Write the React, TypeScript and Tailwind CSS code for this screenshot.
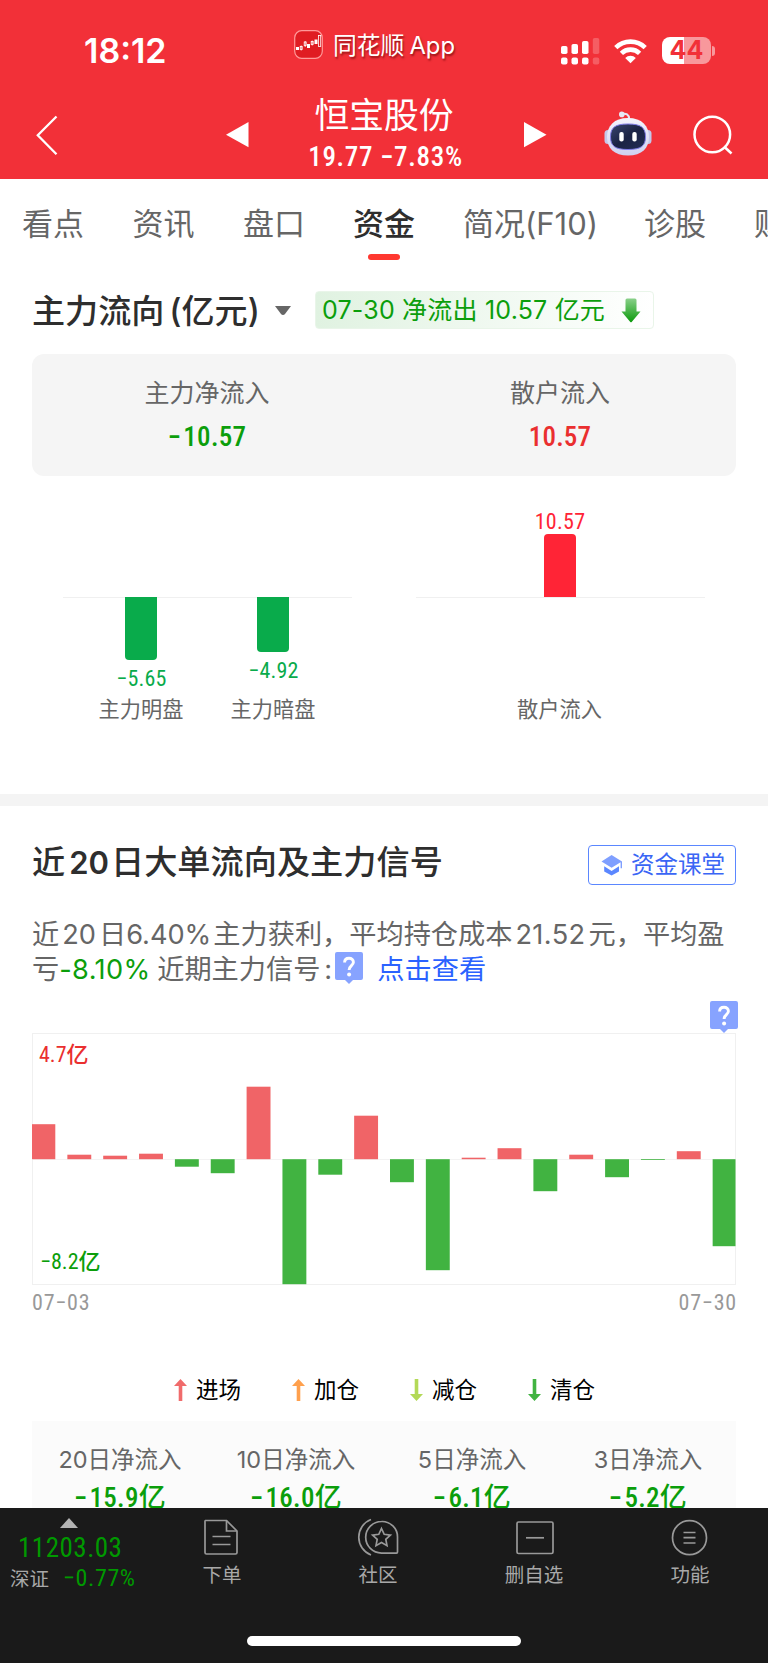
import type { ReactNode } from 'react';

const TABS = [
  { label: '看点', width: 'w-[110.500px]' },
  { label: '资讯', width: 'w-[110.500px]' },
  { label: '盘口', width: 'w-[110px]' },
  { label: '资金', width: 'w-[110px]', active: true },
  { label: '简况(F10)', width: 'w-[181px]' },
  { label: '诊股', width: 'w-[110px]' },
  { label: '财务', width: 'w-[110px]' },
];

// bar heights in px, positive above the zero line
const DAILY = [
  35, 4.5, 3.5, 5.5, -7.5, -14, 72.5, -125, -15.5, 43.5,
  -23, -111, 1.5, 11, -32, 4.5, -18, -0.8, 8, -87,
];

const LEGEND = [
  { label: '进场', color: 'text-[#f06b6b]', up: true },
  { label: '加仓', color: 'text-[#ffa04d]', up: true },
  { label: '减仓', color: 'text-[#b3d957]', up: false },
  { label: '清仓', color: 'text-[#41b341]', up: false },
];

const TOTALS = [
  { label: '20日净流入', value: '15.9' },
  { label: '10日净流入', value: '16.0' },
  { label: '5日净流入', value: '6.1' },
  { label: '3日净流入', value: '5.2' },
];

function Num({ children, className = '' }: { children: ReactNode; className?: string }) {
  return (
    <span className={`inline-block whitespace-nowrap font-['Roboto','Noto_Sans_CJK_SC',sans-serif] font-[450] [font-stretch:87%] ${className}`}>
      {children}
    </span>
  );
}

function HelpIcon() {
  return (
    <svg width="28" height="32" viewBox="0 0 28 32" className="block shrink-0">
      <path d="M2 0h24a2 2 0 0 1 2 2v24a2 2 0 0 1-2 2h-8l-4 4-4-4H2a2 2 0 0 1-2-2V2a2 2 0 0 1 2-2z" fill="#87a3ff" />
      <path d="M9.6 10.6c0-2.7 1.8-4.3 4.4-4.3s4.4 1.6 4.4 4c0 3.3-4.3 3.5-4.3 7.6" fill="none" stroke="#fff" strokeWidth="2.9" />
      <circle cx="14.1" cy="22.5" r="2" fill="#fff" />
    </svg>
  );
}

function StatusBar() {
  return (
    <div className="flex h-[90px] items-start text-white">
      <div className="ml-[84px] mt-[31px] w-[210px] text-[34px] font-semibold leading-10">18:12</div>
      <svg width="29" height="29" viewBox="0 0 29 29" className="mt-[30px]">
        <rect x="0.7" y="0.7" width="27.6" height="27.6" rx="7" fill="#e01c22" stroke="#f99" strokeWidth="1.2" />
        <g fill="#fff">
          <rect x="2" y="17" width="3" height="3" />
          <rect x="13" y="14" width="3" height="4" />
          <rect x="20.500" y="9.500" width="3" height="4.500" />
        </g>
        <g fill="none" stroke="#fff" strokeWidth="0.8">
          <path d="M7.200 15.500v5M11.200 11v6M18.200 10.500v5" />
          <rect x="6.200" y="16.500" width="2" height="3" />
          <rect x="10.200" y="12" width="2" height="3.500" />
          <rect x="17.200" y="11.500" width="2" height="3" />
          <rect x="24.500" y="5.500" width="2.200" height="11" />
        </g>
      </svg>
      <div className="ml-[10px] mt-[30px] w-[228px] whitespace-nowrap text-[23.800px] leading-8 [text-shadow:1px_2px_2px_rgba(90,0,0,0.6)]">
        同花顺<span className="ml-[5px]">App</span>
      </div>
      <svg width="39" height="28" viewBox="0 0 39 28" className="mt-[37px]" fill="#fff">
        <rect x="0" y="9" width="6.500" height="8" rx="1.800" />
        <rect x="0" y="20.500" width="6.500" height="7" rx="2" />
        <rect x="10.500" y="7" width="6.500" height="10" rx="1.800" />
        <rect x="10.500" y="20.500" width="6.500" height="7" rx="2" />
        <rect x="21" y="4" width="6.500" height="13" rx="1.800" />
        <rect x="21" y="20.500" width="6.500" height="7" rx="2" />
        <rect x="31.800" y="1" width="6.500" height="16" rx="1.800" opacity=".22" />
        <rect x="31.800" y="20.500" width="6.500" height="7" rx="2" opacity=".22" />
      </svg>
      <svg width="33" height="25" viewBox="0 0 33 25" className="ml-[14px] mt-[39px]">
        <g fill="none" stroke="#fff" strokeWidth="4.600">
          <path d="M1.800 8.600a21 21 0 0 1 29.400 0" />
          <path d="M7.400 14.300a13 13 0 0 1 18.200 0" />
        </g>
        <path d="M16.500 24.300l-5.300-5.400a7.500 7.500 0 0 1 10.600 0z" fill="#fff" />
      </svg>
      <div className="ml-[15px] mt-[37px] flex h-[27px] items-center">
        <div className="flex h-full w-[49px] items-center justify-center rounded-[8px] bg-[linear-gradient(90deg,#fff_0_44%,#f8989c_44%)] text-[25px] font-bold leading-none text-[#f23038]">
          44
        </div>
        <div className="ml-px h-2.5 w-[3px] rounded-r-full bg-[#f8989c]" />
      </div>
    </div>
  );
}

function Robot() {
  return (
    <svg width="48" height="46" viewBox="0 0 48 46" className="block">
      <defs>
        <linearGradient id="shell" x1="0" y1="0" x2="0" y2="1">
          <stop offset="0" stopColor="#f4f4fd" />
          <stop offset="1" stopColor="#cfd0f0" />
        </linearGradient>
        <linearGradient id="face" x1="0" y1="0" x2="1" y2="1">
          <stop offset="0" stopColor="#39456f" />
          <stop offset="0.500" stopColor="#1b2344" />
          <stop offset="1" stopColor="#232c55" />
        </linearGradient>
      </defs>
      <path d="M18 3c4-1 7 0.500 7.200 5" fill="none" stroke="#e6e8f6" strokeWidth="2" />
      <circle cx="17.800" cy="3.400" r="2.800" fill="#e6e8f6" />
      <rect x="0.500" y="19" width="7" height="14" rx="3.500" fill="#c5c7ea" />
      <rect x="40.500" y="19" width="7" height="14" rx="3.500" fill="#c5c7ea" />
      <path d="M24 7c14 0 21 8 21 19s-7 18.500-21 18.500S3 37 3 26 10 7 24 7z" fill="url(#shell)" />
      <path d="M24 13c13 0 17.500 3.500 17.500 12.800S37 38.500 24 38.500 6.500 35.100 6.500 25.800 11 13 24 13z" fill="url(#face)" stroke="#7f7be6" strokeWidth="1" />
      <rect x="15.300" y="21" width="4.400" height="9.500" rx="2" fill="#fff" />
      <rect x="28.300" y="21" width="4.400" height="9.500" rx="2" fill="#fff" />
    </svg>
  );
}

function NavBar() {
  return (
    <div className="flex h-[89px] items-start text-white">
      <svg width="22" height="40" viewBox="0 0 22 40" className="ml-9 mt-[25px]" fill="none" stroke="#fff" strokeWidth="2.300">
        <path d="M20.500 1.500L1.800 20.300l18.700 18.900" />
      </svg>
      <svg width="23" height="26" viewBox="0 0 23 26" className="ml-[168px] mt-8" fill="#fff">
        <path d="M0 12.800L22.500 0v25.300z" />
      </svg>
      <div className="flex w-[275px] flex-col items-center pr-[5px]">
        <div className="mt-0.5 text-[34.800px] leading-[46px]">恒宝股份</div>
        <Num className="ml-[3px] mt-[3px] text-[27px] font-medium leading-8 tracking-[0.700px]">19.77 −7.83%</Num>
      </div>
      <svg width="23" height="26" viewBox="0 0 23 26" className="mt-8" fill="#fff">
        <path d="M22.500 12.800L0 0v25.300z" />
      </svg>
      <div className="ml-[57px] mt-[21px]">
        <Robot />
      </div>
      <svg width="42" height="42" viewBox="0 0 42 42" className="ml-10 mt-6" fill="none" stroke="#fff" strokeWidth="2.500">
        <circle cx="20.300" cy="20.500" r="17.800" />
        <path d="M32 32.500l7.500 7" />
      </svg>
    </div>
  );
}

function FlowBar({ value, label, height }: { value: string; label: string; height: number }) {
  const up = height > 0;
  return (
    <div className="flex w-[132px] flex-col items-center">
      <div className="flex h-[91px] flex-col items-center justify-end">
        {up && (
          <>
            <Num className="text-[22px] leading-6 tracking-[0.300px] text-[#ff2436]">{value}</Num>
            <div className="w-8 rounded-t-[4px] bg-[#ff2436]" style={{ height }} />
          </>
        )}
      </div>
      <div className="flex h-[96px] flex-col items-center">
        {!up && (
          <>
            <div className="w-8 rounded-b-[4px] bg-[#09ab4b]" style={{ height: -height }} />
            <Num className="mt-[7px] text-[22px] leading-6 tracking-[0.200px] text-[#09ab4b]">{value}</Num>
          </>
        )}
      </div>
      <div className="-ml-px text-[21.200px] leading-8 text-[#666]">{label}</div>
    </div>
  );
}

function MainFlow() {
  return (
    <section className="h-[524px] px-8">
      <div className="flex items-start pt-[21px]">
        <h2 className="w-[243px] whitespace-nowrap pt-px text-[33.100px] font-medium leading-[38px] text-[#2e2e2e]">
          主力流向<span className="ml-[5px]">(</span>亿元)
        </h2>
        <svg width="16" height="9" viewBox="0 0 16 9" className="mt-[15px]" fill="#666">
          <path d="M0 0h16L10 8a2.500 2.500 0 0 1-4 0z" />
        </svg>
        <div className="ml-[24px] flex h-[38px] w-[339px] items-center rounded-[4px] border border-[#e9f5e9] bg-linear-to-r from-[#e0f2e1] to-white pl-1.5 text-[25px] text-[#0b9e0b]">
          <span className="w-[299px] whitespace-nowrap pt-px tracking-[0.200px]">07-30 净流出 10.57 亿元</span>
          <svg width="20" height="25" viewBox="0 0 20 25">
            <defs>
              <linearGradient id="down" x1="0" y1="0" x2="0" y2="1">
                <stop offset="0" stopColor="#8ad08a" />
                <stop offset="1" stopColor="#0b9a0b" />
              </linearGradient>
            </defs>
            <path d="M6 0.500h8a1.500 1.500 0 0 1 1.500 1.500v11.500h4L10.700 24a1 1 0 0 1-1.400 0L0.500 13.500h4V2A1.500 1.500 0 0 1 6 0.500z" fill="url(#down)" />
          </svg>
        </div>
      </div>

      <div className="mt-6 grid h-[122px] grid-cols-2 rounded-[12px] bg-[#f5f5f5] pt-[21px] text-center">
        <div className="pr-0.5">
          <div className="text-[25px] leading-9 text-[#666]">主力净流入</div>
          <Num className="mt-2 text-[27px] font-medium leading-9 tracking-[0.300px] text-[#0b9e0b]">
            <span className="mr-0.5">−</span>10.57
          </Num>
        </div>
        <div>
          <div className="text-[25px] leading-9 text-[#666]">散户流入</div>
          <Num className="mt-2 text-[27px] font-medium leading-9 tracking-[0.200px] text-[#ea2f2f]">10.57</Num>
        </div>
      </div>

      <div className="mt-[30px] grid grid-cols-2 px-[31px]">
        <div className="mr-8 flex justify-center bg-[linear-gradient(#f0f0f0,#f0f0f0)] bg-[length:100%_1px] bg-[position:0_91px] bg-no-repeat">
          <FlowBar value="−5.65" label="主力明盘" height={-63} />
          <FlowBar value="−4.92" label="主力暗盘" height={-55} />
        </div>
        <div className="ml-8 flex justify-center bg-[linear-gradient(#f0f0f0,#f0f0f0)] bg-[length:100%_1px] bg-[position:0_91px] bg-no-repeat pr-px">
          <FlowBar value="10.57" label="散户流入" height={63} />
        </div>
      </div>
    </section>
  );
}

function DailyChart() {
  return (
    <div className="relative">
      <svg width="704" height="252" viewBox="0 0 704 252" className="block">
        <rect x="0.500" y="0.500" width="703" height="251" fill="none" stroke="#f0f0f0" />
        <path d="M0 126.500h704" stroke="#f3f3f3" />
        {DAILY.map((v, i) => (
          <rect
            key={i}
            x={Math.max(0, i * 35.85 - 0.5)}
            y={v > 0 ? 126.2 - v : 126.2}
            width={i === 0 ? 23.3 : Math.min(23.9, 704 - i * 35.85)}
            height={Math.abs(v)}
            fill={v > 0 ? '#f06467' : '#41b341'}
          />
        ))}
      </svg>
      <Num className="absolute left-[7px] top-[6px] text-[22px] leading-8 text-[#ea2f2f]">4.7亿</Num>
      <Num className="absolute bottom-[7px] left-2 text-[22px] leading-8 text-[#0b9e0b]">−8.2亿</Num>
    </div>
  );
}

function Signals() {
  return (
    <section className="h-[702px] overflow-hidden px-8">
      <div className="flex items-start justify-between pt-[35px]">
        <h2 className="whitespace-nowrap text-[33.200px] font-medium leading-[42px] text-[#2e2e2e]">
          近<span className="ml-1 mr-0.5 text-[31px] font-semibold">20</span>日大单流向及主力信号
        </h2>
        <div className="mt-1 flex h-[40px] w-[148px] items-center rounded-[4px] border border-[#5b87ff] pl-3 text-[23.500px] leading-none text-[#3a66f5]">
          <svg width="22" height="21" viewBox="0 0 22 21" className="mr-2 shrink-0">
            <path d="M10.600 0L0.500 6.600l10.100 6.200 9-5.500v6h1.400V6.600z" fill="#7f9fff" />
            <path d="M3.200 11.300l7.400 4.700 7.400-4.700v5.200l-7.400 4-7.400-4z" fill="#5b87ff" />
          </svg>
          资金课堂
        </div>
      </div>

      <div className="mt-8 whitespace-nowrap text-[27.200px] leading-[35px] text-[#666]">
        <div>
          近<span className="mx-[3px]">20</span>日6.40%<span className="ml-0.5">主力获利，平均持仓成本</span>
          <span className="mx-[3px] tracking-[0.400px]">21.52</span>元，平均盈
        </div>
        <div className="flex">
          亏<span className="w-[98px] tracking-[0.400px] text-[#0b9e0b]">-8.10%</span>近期主力信号
          <span className="ml-[4px] w-[11px]">:</span>
          <HelpIcon />
          <a className="ml-[14px] text-[#2b62ff]">点击查看</a>
        </div>
      </div>

      <div className="-mr-[2px] mt-[14px] flex justify-end">
        <HelpIcon />
      </div>
      <DailyChart />
      <div className="mt-0.5 flex justify-between text-[22px] leading-8 text-[#999]">
        <Num className="tracking-[0.800px]">07−03</Num>
        <Num className="-mr-px tracking-[0.800px]">07−30</Num>
      </div>

      <div className="ml-[142px] mt-[53px] flex">
        {LEGEND.map((l) => (
          <div key={l.label} className="flex w-[118px] items-center text-[22.500px] leading-9 text-black">
            <svg width="13" height="22" viewBox="0 0 13 22" className={`mr-[9px] ${l.color} ${l.up ? '' : 'rotate-180'}`}>
              <path d="M6.500 0L13 7H8.300v15H4.700V7H0z" fill="currentColor" />
            </svg>
            {l.label}
          </div>
        ))}
      </div>

      <div className="mt-[13px] grid h-40 grid-cols-4 bg-[#fbfbfb] pt-[21px] text-center">
        {TOTALS.map((t) => (
          <div key={t.label}>
            <div className="text-[23.500px] leading-9 text-[#666]">{t.label}</div>
            <Num className="mt-0.5 text-[27px] font-medium leading-9 tracking-[0.300px] text-[#0b9e0b]">
              <span className="mr-0.5">−</span>{t.value}亿
            </Num>
          </div>
        ))}
      </div>
    </section>
  );
}

function BottomItem({ label, children }: { label: string; children: ReactNode }) {
  return (
    <div className="flex w-[156px] flex-col items-center pt-2">
      <svg width="42" height="44" viewBox="0 0 42 44" fill="none" stroke="#999" strokeWidth="1.700">
        {children}
      </svg>
      <div className="-mt-px text-[19.500px] leading-8 text-[#a8a8a8]">{label}</div>
    </div>
  );
}

function BottomBar() {
  return (
    <footer className="h-[155px] bg-[#1a1a1a]">
      <div className="flex h-[128px]">
        <div className="flex w-[144px] flex-col pt-2.5">
          <svg width="18" height="10" viewBox="0 0 18 10" className="ml-[60px]" fill="#b3b3b3">
            <path d="M9 0l9 10H0z" />
          </svg>
          <Num className="ml-[18px] mt-[5px] text-[27px] leading-[30px] tracking-[0.500px] text-[#009900]">11203.03</Num>
          <div className="flex items-center pl-2.5 leading-[28px] text-[#a8a8a8]">
            <span className="w-[53px] pt-0.5 text-[19.500px]">深证</span>
            <Num className="text-[24px] tracking-[0.600px] text-[#009900]">−0.77%</Num>
          </div>
        </div>
        <BottomItem label="下单">
          <path d="M4.500 4.500h21l10.500 10.500v21.500a1.500 1.500 0 0 1-1.500 1.500h-29a1.500 1.500 0 0 1-1.500-1.500V5z" />
          <path d="M25.500 4.500v10.500h10.500M11.500 20.500h18M11.500 28.500h18" />
        </BottomItem>
        <BottomItem label="社区">
          <path d="M14 3.500a19 19 0 0 0 0 35.500" />
          <path d="M24.500 5.500a15.800 15.800 0 1 0 0 31.600H39.500a1 1 0 0 0 1-1V21.300A15.500 15.500 0 0 0 24.500 5.500z" />
          <path d="M24.500 12.500l2.700 5.800 6.200.8-4.600 4.300 1.200 6.300-5.500-3.100-5.500 3.100 1.200-6.300-4.600-4.300 6.200-.8z" />
        </BottomItem>
        <BottomItem label="删自选">
          <rect x="4" y="6" width="36" height="31.500" rx="1.500" />
          <path d="M13 21.800h18" />
        </BottomItem>
        <BottomItem label="功能">
          <circle cx="20.500" cy="21.700" r="17" />
          <path d="M14.500 16.500h12M14.500 21.700h12M14.500 27h12" />
        </BottomItem>
      </div>
      <div className="mx-auto h-2.5 w-[274px] rounded-full bg-white" />
    </footer>
  );
}

export default function App() {
  return (
    <div className="h-[1663px] w-[768px] overflow-hidden bg-white font-['Inter','Noto_Sans_CJK_SC',sans-serif]">
      <header className="h-[179px] bg-[#f23038]">
        <StatusBar />
        <NavBar />
      </header>

      <nav className="flex h-[91px] overflow-hidden pl-[22px] pt-6">
        {TABS.map((t) => (
          <div key={t.label} className={`shrink-0 ${t.width}`}>
            <div className="w-fit whitespace-nowrap text-[31px] leading-[42px]">
              <div className={t.active ? 'font-medium text-[#2e2e2e]' : 'text-[#666]'}>{t.label}</div>
              {t.active && <div className="mx-auto mt-[9px] h-1.5 w-8 rounded-full bg-[#ff3830]" />}
            </div>
          </div>
        ))}
      </nav>

      <MainFlow />
      <div className="h-3 bg-[#f4f4f4]" />
      <Signals />
      <BottomBar />
    </div>
  );
}
